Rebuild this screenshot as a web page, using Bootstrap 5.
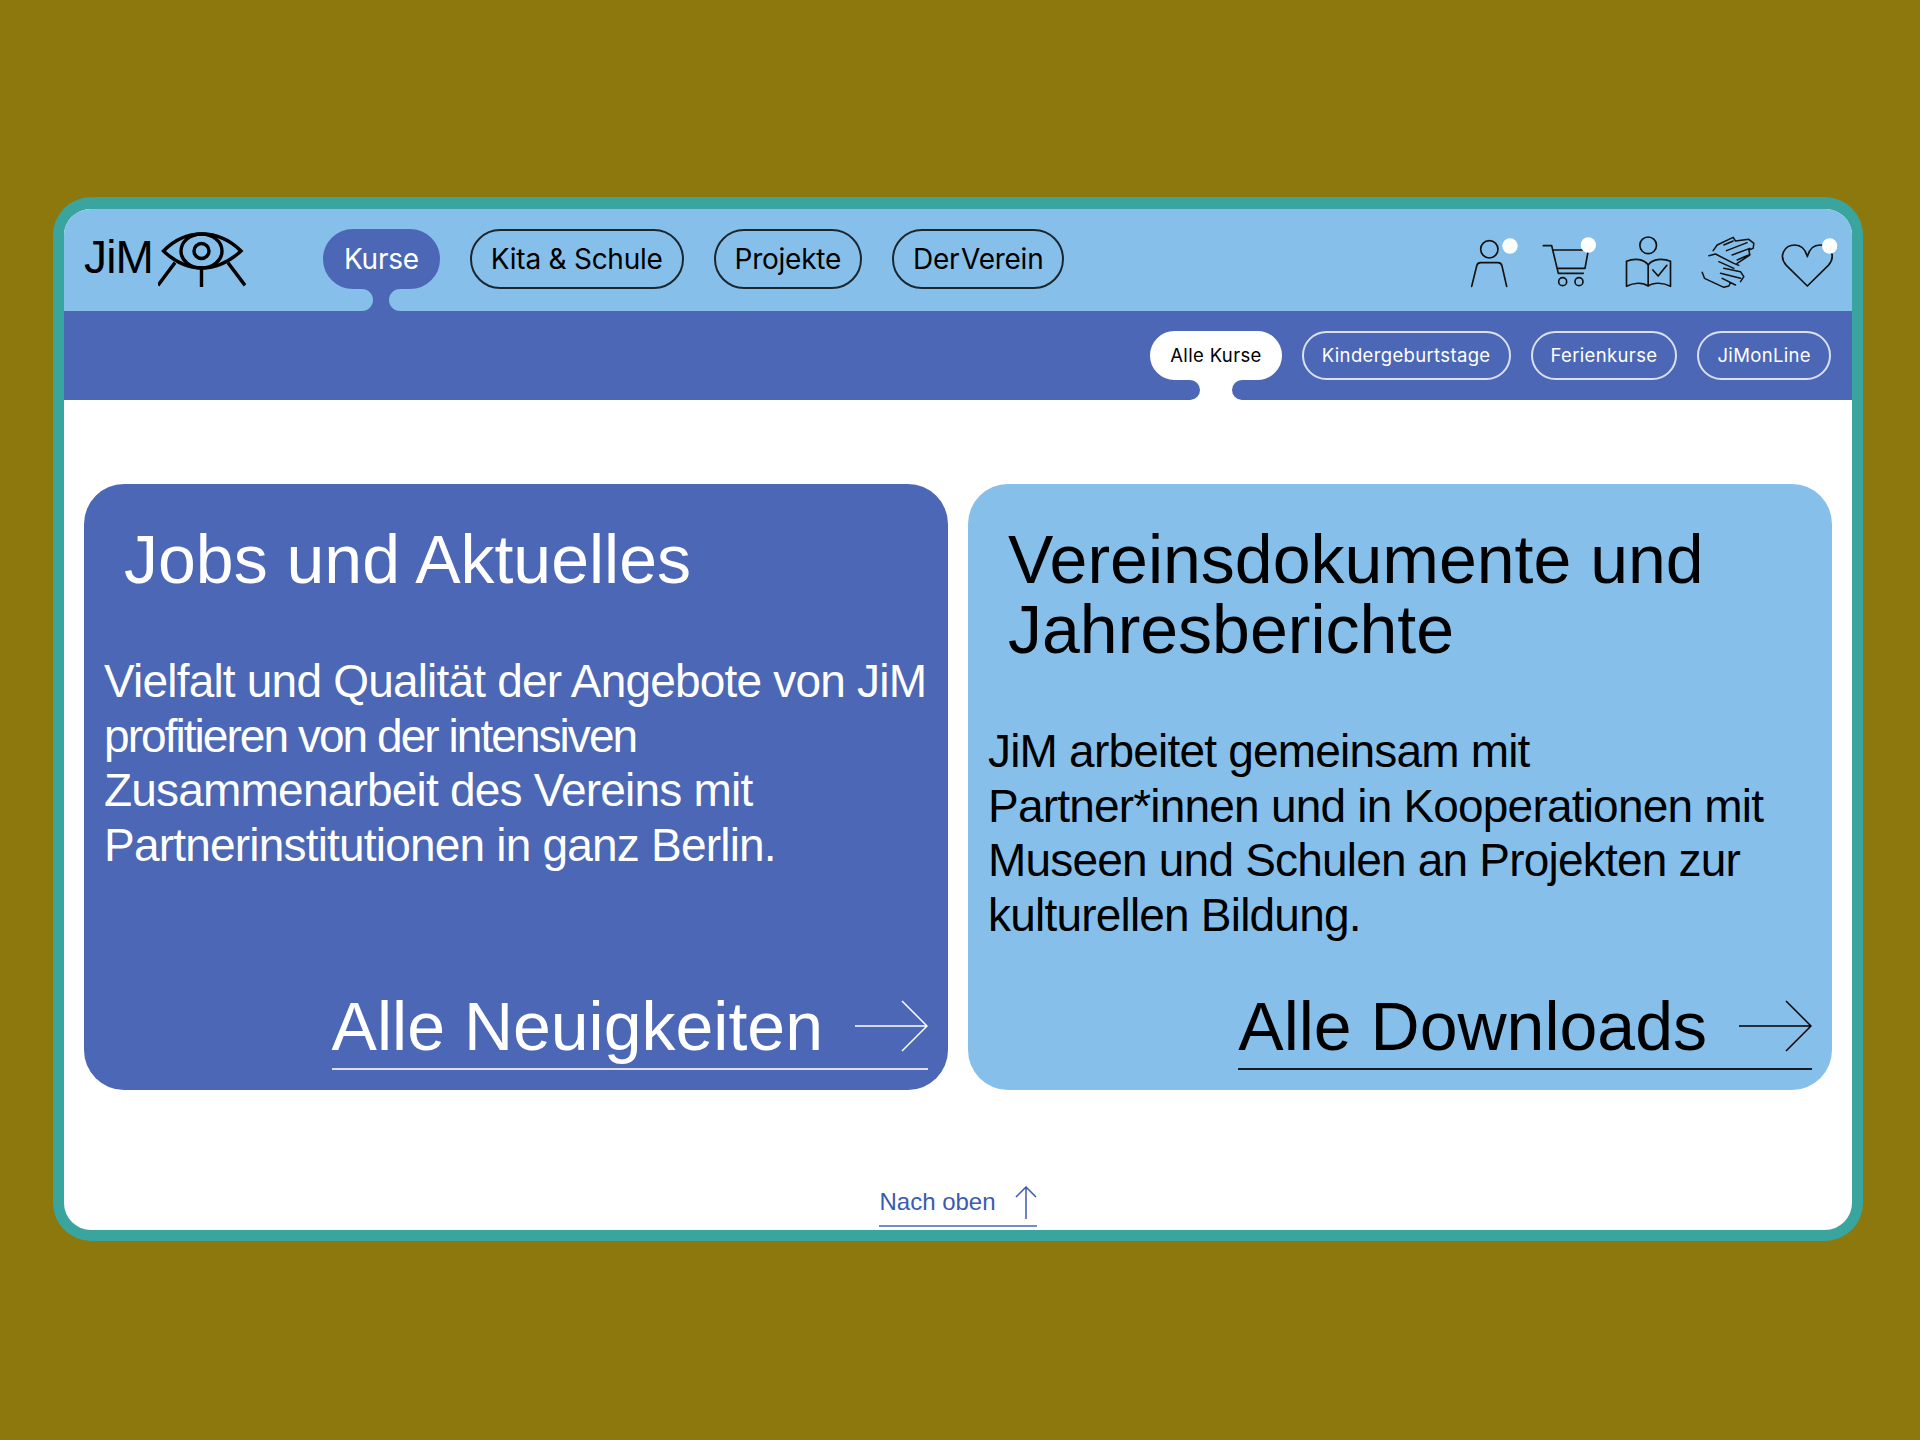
<!DOCTYPE html>
<html lang="de">
<head>
<meta charset="utf-8">
<title>JiM</title>
<link href="https://cdn.jsdelivr.net/npm/bootstrap@5.3.0/dist/css/bootstrap.min.css" rel="stylesheet">
<style>
html,body{height:1440px;overflow:hidden}
body{background:#8c780c;padding:197px 57px 0 53px;font-family:"Liberation Sans",Arial,sans-serif;color:#000}
.frame{height:1044px;border:11px solid #3aa59f;border-top-width:12px;border-radius:38px;overflow:hidden;background:#fff}
.topbar{height:102px;background:#86c0ea;padding:20px 14px 0 20px}
.brand{width:239px;color:#000;text-decoration:none;height:56px}
.brand-name{font-size:46px;line-height:45px;letter-spacing:-.8px;margin-right:5px;margin-top:6px}
.brand svg{margin-top:3px}
.main-pill{display:block;position:relative;height:60px;line-height:56px;padding:0 19px;border:2px solid rgba(0,0,0,.8);border-radius:30px;font-family:Inter,"Liberation Sans",sans-serif;font-size:28px;letter-spacing:-.25px;color:#000;text-decoration:none}
.main-pill.on{background:#4b67b5;border-color:#4b67b5;color:#fff}
.main-pill.close-words{word-spacing:-6px}
.neck{position:absolute;top:calc(100% + 2px);left:50%;transform:translateX(-50%);display:block}
.main-links{gap:30px}
.tool-icons{margin-top:7px}
.subbar{height:89px;background:#4b67b5;padding:20px 21px 0 0;gap:20px}
.sub-pill{display:block;position:relative;height:49px;line-height:45px;padding:0 18px;border:2px solid rgba(255,255,255,.8);border-radius:25px;font-family:Inter,"Liberation Sans",sans-serif;font-size:18.5px;letter-spacing:.35px;color:#fff;text-decoration:none}
.sub-pill.on{background:#fff;background-clip:border-box;border-color:#fff;color:#000}
.stage{padding:84px 20px 0}
.pair{--bs-gutter-x:20px}
.info-box{height:606px;border-radius:40px;padding:40px 20px 20px}
.info-box.deep{background:#4b67b5;color:#fff}
.info-box.pale{background:#86c0ea;color:#000}
.box-title{font-size:68px;line-height:70px;font-weight:400;margin:0 0 60px 20px}
.box-text{font-size:46px;line-height:54.5px;letter-spacing:-.8px;margin:0;white-space:nowrap}
.squeezed{letter-spacing:-1.95px}
.box-link{font-size:68px;line-height:70px;color:inherit;text-decoration:none;border-bottom:2px solid rgba(255,255,255,.8);padding-bottom:7px;gap:32px}
.pale .box-link{border-bottom-color:rgba(0,0,0,.85)}
.to-top{font-size:24px;line-height:30px;color:#3c5ab0;text-decoration:none;border-bottom:2px solid #728bcd;gap:19px;height:52px;padding-top:4px;margin-top:85px}
</style>
</head>
<body>
<div class="frame d-flex flex-column">
  <header class="topbar d-flex align-items-start">
    <a class="brand d-flex align-items-start" href="#">
      <span class="brand-name">JiM</span>
      <svg width="88" height="55" viewBox="157 232 88 55" fill="none" stroke="#000" stroke-width="3.4" stroke-linecap="square" aria-hidden="true"><path d="M162.500 251C175 238 188 234 201 234S227 238 240 251C228 262 214 268 201 268S174 262 162.500 251Z"/><ellipse cx="200.500" cy="251" rx="20.500" ry="17"/><circle cx="200.500" cy="251" r="7.500"/><path d="M173 264 158 284M200.500 270V286M228 264 243 284"/></svg>
    </a>
    <nav class="main-links d-flex">
      <a class="main-pill on" href="#">Kurse<svg class="neck" width="60" height="22" viewBox="0 0 60 22" aria-hidden="true"><path fill="#4b67b5" d="M11 0A11 11 0 0 1 22 11 11 11 0 0 1 11 22H49A11 11 0 0 1 38 11 11 11 0 0 1 49 0Z"/></svg></a>
      <a class="main-pill" href="#">Kita &amp; Schule</a>
      <a class="main-pill" href="#">Projekte</a>
      <a class="main-pill close-words" href="#">Der Verein</a>
    </nav>
    <div class="tool-icons d-flex ms-auto">
      <svg width="60" height="54" viewBox="150 138 180 162" fill="none" stroke="#111" stroke-width="5" stroke-linecap="round" stroke-linejoin="round" aria-hidden="true"><circle cx="208" cy="178" r="26"/><path d="M155 289 170 228Q172 218 182 218H234Q244 218 246 228L260 289"/><circle cx="270" cy="168" r="23" fill="#fff" stroke="none"/></svg>
      <svg width="85" height="54" viewBox="330 138 255 162" fill="none" stroke="#111" stroke-width="5" stroke-linecap="round" stroke-linejoin="round" aria-hidden="true"><path d="M370 167H395L415 250H490M400 180H505L495 235H412"/><circle cx="428" cy="275" r="12"/><circle cx="477" cy="275" r="12"/><circle cx="505" cy="165" r="23" fill="#fff" stroke="none"/></svg>
      <svg width="72" height="54" viewBox="585 138 215 162" fill="none" stroke="#111" stroke-width="5" stroke-linecap="round" stroke-linejoin="round" aria-hidden="true"><circle cx="684" cy="166" r="25"/><path d="M684 225V288M684 225C672 208 645 203 619 214V289C640 278 668 276 684 288 700 276 730 278 751 289V214C725 203 696 208 684 225ZM698 240 714 258 740 226"/></svg>
      <svg width="82" height="54" viewBox="800 138 245 162" fill="none" stroke="#111" stroke-width="4.500" stroke-linecap="round" stroke-linejoin="round" aria-hidden="true"><path d="M878 182 890 165 938 142 945 153 985 148 1000 160 998 175 985 180 988 195 950 220M910 165 938 153M918 182 980 158M935 195 988 175M950 210 988 193M865 197 885 192 940 220 955 226M845 247 852 265 910 292 925 288 930 278M895 215 940 235M910 235 960 245 970 260 960 275M900 250 960 265M905 265 945 285"/></svg>
      <svg width="69" height="54" viewBox="1045 138 207 162" fill="none" stroke="#111" stroke-width="5" stroke-linecap="round" stroke-linejoin="round" aria-hidden="true"><path d="M1160 288 1097 226C1072 198 1092 165 1122 165 1142 165 1155 180 1160 200 1165 180 1178 165 1198 165 1228 165 1248 198 1223 226Z"/><circle cx="1227" cy="168" r="23" fill="#fff" stroke="none"/></svg>
    </div>
  </header>
  <nav class="subbar d-flex justify-content-end">
    <a class="sub-pill on" href="#">Alle Kurse<svg class="neck" width="72" height="20" viewBox="0 0 72 20" aria-hidden="true"><path fill="#fff" d="M10 0A10 10 0 0 1 20 10 10 10 0 0 1 10 20H62A10 10 0 0 1 52 10 10 10 0 0 1 62 0Z"/></svg></a>
    <a class="sub-pill" href="#">Kindergeburtstage</a>
    <a class="sub-pill" href="#">Ferienkurse</a>
    <a class="sub-pill" href="#">JiMonLine</a>
  </nav>
  <main class="stage d-flex flex-column flex-grow-1">
    <div class="row pair">
      <div class="col-6">
        <section class="info-box deep d-flex flex-column">
          <h2 class="box-title">Jobs und Aktuelles</h2>
          <p class="box-text">Vielfalt und Qualität der Angebote von JiM<br><span class="squeezed">profitieren von der intensiven</span><br>Zusammenarbeit des Vereins mit<br>Partnerinstitutionen in ganz Berlin.</p>
          <a class="box-link d-flex align-items-center align-self-end mt-auto" href="#">Alle Neuigkeiten
            <svg width="73" height="52" viewBox="0 0 73 52" fill="none" stroke="currentColor" stroke-width="1.5" aria-hidden="true"><path d="M0 26H72M47 1 72 26 47 51"/></svg></a>
        </section>
      </div>
      <div class="col-6">
        <section class="info-box pale d-flex flex-column">
          <h2 class="box-title">Vereinsdokumente und<br>Jahresberichte</h2>
          <p class="box-text">JiM arbeitet gemeinsam mit<br>Partner*innen und in Kooperationen mit<br>Museen und Schulen an Projekten zur<br>kulturellen Bildung.</p>
          <a class="box-link d-flex align-items-center align-self-end mt-auto" href="#">Alle Downloads
            <svg width="73" height="52" viewBox="0 0 73 52" fill="none" stroke="currentColor" stroke-width="1.5" aria-hidden="true"><path d="M0 26H72M47 1 72 26 47 51"/></svg></a>
        </section>
      </div>
    </div>
    <a class="to-top d-inline-flex align-items-center align-self-center" href="#">Nach oben
      <svg width="22" height="33" viewBox="0 0 22 33" fill="none" stroke="currentColor" stroke-width="1.5" aria-hidden="true"><path d="M11 33V1M1 11 11 1 21 11"/></svg></a>
  </main>
</div>
</body>
</html>
